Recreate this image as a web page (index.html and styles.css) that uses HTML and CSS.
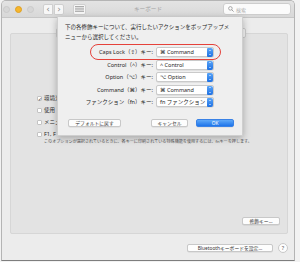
FILE: index.html
```html
<!DOCTYPE html>
<html lang="ja">
<head>
	<meta charset="utf-8">
	<title>キーボード</title>
	<link rel="stylesheet" href="styles.css">
</head>
<body>
	<div class="window">
		<div class="titlebar">
			<div class="tb-left">
				<span class="light off"></span>
				<span class="light min"></span>
				<span class="light off"></span>
				<div class="nav">
					<span class="nav-btn">&lsaquo;</span>
					<span class="nav-btn">&rsaquo;</span>
				</div>
				<span class="grid-btn">
					<svg width="9" height="6" viewBox="0 0 9 6"><path d="M0 .5h9M0 2.2h9M0 3.9h9M0 5.6h9" stroke="#8a8a8a" stroke-width=".7"/></svg>
				</span>
			</div>
			<div class="title">キーボード</div>
			<div class="tb-right">
				<div class="search">
					<svg width="6" height="6" viewBox="0 0 6 6"><circle cx="2.4" cy="2.4" r="1.8" fill="none" stroke="#8a8a8a" stroke-width=".7"/><path d="M3.7 3.7L5.6 5.6" stroke="#8a8a8a" stroke-width=".8"/></svg>
					<span>検索</span>
				</div>
			</div>
		</div>

		<div class="content">
			<div class="panel">
				<div class="tabs"><span class="tabs-seg"></span></div>
				<ul class="checks">
					<li><span class="box">✓</span>環境光</li>
					<li><span class="box"></span>使用</li>
					<li><span class="box"></span>メニュ</li>
					<li><span class="box"></span>F1, F</li>
				</ul>
				<p class="note">このオプションが選択されているときに、各キーに印刷されている特殊機能を使用するには、fnキーを押します。</p>
				<div class="panel-foot">
					<span class="btn">修飾キー...</span>
				</div>
			</div>
			<div class="footer">
				<span class="btn">Bluetoothキーボードを設定...</span>
				<span class="help">?</span>
			</div>
		</div>

		<div class="sheet">
			<p class="sheet-text">下の各修飾キーについて、実行したいアクションをポップアップメニューから選択してください。</p>
			<div class="rows">
				<span class="label">Caps Lock（<span class="sym">⇪</span>）キー:</span>
				<span class="popup"><span class="sym">⌘</span> Command<i class="stepper"></i></span>
				<span class="label">Control（^）キー:</span>
				<span class="popup">^ Control<i class="stepper"></i></span>
				<span class="label">Option（<span class="sym">⌥</span>）キー:</span>
				<span class="popup"><span class="sym">⌥</span> Option<i class="stepper"></i></span>
				<span class="label">Command（<span class="sym">⌘</span>）キー:</span>
				<span class="popup"><span class="sym">⌘</span> Command<i class="stepper"></i></span>
				<span class="label">ファンクション（fn）キー:</span>
				<span class="popup">fn ファンクション<i class="stepper"></i></span>
			</div>
			<div class="sheet-buttons">
				<span class="btn">デフォルトに戻す</span>
				<span class="btn cancel">キャンセル</span>
				<span class="btn ok">OK</span>
			</div>
			<span class="ring"></span>
		</div>
	</div>
</body>
</html>
```

FILE: styles.css
```css
*{
	margin: 0px;
	padding: 0px;
	box-sizing: border-box;
}
body{
	background-color: #f2f2f2;
	font-family: "Noto Sans", "Noto Sans CJK JP", "DejaVu Sans", sans-serif;
	color: #262626;
}
.sym{
	font-family: "DejaVu Sans", sans-serif;
}
.window{
	position: relative;
	width: 294px;
	height: 261px;
	margin-left: 1px;
	background-color: #ececec;
	border: 1px solid #b4b4b4;
	border-bottom-color: #7e7e7e;
	border-radius: 5px 5px 0 0;
	overflow: hidden;
}
.titlebar{
	height: 17px;
	display: grid;
	grid-template-columns: 1fr auto 1fr;
	align-items: center;
	background-image: linear-gradient(#e3e3e3, #d8d8d8);
	border-bottom: 1px solid #c6c6c6;
}
.tb-left{
	display: flex;
	align-items: center;
	gap: 5px;
	padding-left: 1px;
}
.light{
	width: 7px;
	height: 7px;
	border-radius: 50%;
	background-color: #d6d6d6;
	border: 0.5px solid #cacaca;
}
.light.min{
	background-color: #f6b62c;
	border-color: #dea024;
}
.nav{
	display: flex;
	margin-left: 4px;
	gap: 1px;
}
.nav-btn{
	width: 10px;
	height: 11px;
	background-color: #f7f7f7;
	border: 0.5px solid #cfcfcf;
	font-size: 9px;
	line-height: 9px;
	text-align: center;
	color: #8c8c8c;
	font-family: "DejaVu Sans", sans-serif;
}
.nav-btn:first-child{
	border-radius: 2px 0 0 2px;
}
.nav-btn:last-child{
	border-radius: 0 2px 2px 0;
}
.grid-btn{
	width: 13px;
	height: 11px;
	margin-left: 4px;
	background-color: #f7f7f7;
	border: 0.5px solid #cfcfcf;
	border-radius: 2px;
	display: flex;
	align-items: center;
	justify-content: center;
}
.title{
	font-size: 5.6px;
	color: #a4a4a4;
}
.tb-right{
	display: flex;
	justify-content: flex-end;
	padding-right: 3px;
}
.search{
	width: 68px;
	height: 12px;
	background-color: #fbfbfb;
	border: 0.5px solid #cdcdcd;
	border-radius: 3px;
	display: flex;
	align-items: center;
	gap: 2px;
	padding-left: 4px;
	font-size: 5px;
	color: #b0b0b0;
}
.content{
	padding: 15px 6px 0 8px;
}
.panel{
	height: 201px;
	background-color: #e3e3e3;
	border: 1px solid #d6d6d6;
	border-radius: 2px;
	display: flex;
	flex-direction: column;
}
.tabs{
	height: 10px;
	margin-top: -6px;
	display: flex;
	justify-content: center;
	padding-left: 4px;
}
.tabs-seg{
	width: 190px;
	height: 10px;
	background-color: #f6f6f6;
	border: 0.5px solid #cdcdcd;
	border-radius: 2px;
}
.checks{
	list-style: none;
	margin-top: 54px;
	padding-left: 26px;
}
.checks li{
	height: 12px;
	display: flex;
	align-items: center;
	gap: 2px;
	font-size: 5.5px;
	white-space: nowrap;
}
.box{
	flex-shrink: 0;
	width: 5px;
	height: 5px;
	background-color: #fff;
	border: 0.5px solid #c3c3c3;
	border-radius: 1px;
	font-size: 5px;
	line-height: 4px;
	text-align: center;
	color: #333;
	font-family: "DejaVu Sans", sans-serif;
}
.note{
	padding-left: 33px;
	margin-top: -1px;
	font-size: 4.1px;
	line-height: 6px;
	color: #555;
	white-space: nowrap;
}
.panel-foot{
	margin-top: auto;
	display: flex;
	justify-content: flex-end;
	padding: 0 7px 8px 0;
}
.btn{
	height: 8px;
	padding: 0 3px;
	background-color: #fdfdfd;
	border: 0.5px solid #c8c8c8;
	border-radius: 2px;
	box-shadow: 0 0.5px 0.5px rgba(0, 0, 0, 0.1);
	font-size: 4.8px;
	line-height: 7px;
	color: #333;
	white-space: nowrap;
}
.panel-foot .btn{
	width: 38px;
	text-align: center;
}
.footer{
	display: flex;
	justify-content: flex-end;
	align-items: center;
	gap: 5px;
	padding-top: 9px;
}
.footer .btn{
	width: 86px;
	text-align: center;
}
.help{
	width: 10px;
	height: 10px;
	border-radius: 50%;
	background-color: #fdfdfd;
	border: 0.5px solid #c8c8c8;
	font-size: 5.5px;
	line-height: 9px;
	text-align: center;
	color: #555;
}
.sheet{
	position: absolute;
	left: 55px;
	top: 16px;
	width: 186px;
	height: 119px;
	background-color: #efefef;
	box-shadow: 0 2px 7px rgba(0, 0, 0, 0.28);
	border: 0.5px solid #cfcfcf;
	border-top: none;
}
.sheet-text{
	padding: 5px 8px 0 7px;
	font-size: 5.5px;
	line-height: 10px;
	color: #262626;
}
.rows{
	display: grid;
	grid-template-columns: 95px 58px;
	column-gap: 3px;
	row-gap: 2.5px;
	margin-top: 5px;
	align-items: center;
}
.label{
	text-align: right;
	font-size: 5.5px;
	line-height: 10px;
	white-space: nowrap;
}
.popup{
	position: relative;
	height: 10px;
	background-color: #fff;
	border: 0.5px solid #cacaca;
	border-radius: 2px;
	box-shadow: 0 0.5px 0.5px rgba(0, 0, 0, 0.12);
	padding-left: 3px;
	font-size: 5.5px;
	line-height: 9px;
	white-space: nowrap;
}
.stepper{
	position: absolute;
	right: 0px;
	top: 0px;
	width: 6px;
	height: 9px;
	border-radius: 1px 2px 2px 1px;
	background-image: linear-gradient(#5aa5f8, #1d70e3);
}
.stepper::before, .stepper::after{
	content: "";
	position: absolute;
	left: 1.8px;
	width: 0;
	height: 0;
	border-left: 1.2px solid transparent;
	border-right: 1.2px solid transparent;
}
.stepper::before{
	top: 1.8px;
	border-bottom: 1.5px solid #fff;
}
.stepper::after{
	bottom: 1.8px;
	border-top: 1.5px solid #fff;
}
.sheet-buttons{
	display: flex;
	align-items: center;
	margin-top: 12px;
	padding-left: 10px;
}
.sheet-buttons .btn{
	width: 53px;
	text-align: center;
}
.sheet-buttons .cancel{
	width: 37px;
	margin-left: 30px;
}
.sheet-buttons .ok{
	width: 38px;
	margin-left: 8px;
	background-image: linear-gradient(#5fa9f9, #1e74ea);
	border-color: #3a82e6;
	color: #fff;
}
.ring{
	position: absolute;
	left: 32px;
	top: 27px;
	width: 131px;
	height: 16px;
	border: 1.4px solid #e5413a;
	border-radius: 8px;
}
```
